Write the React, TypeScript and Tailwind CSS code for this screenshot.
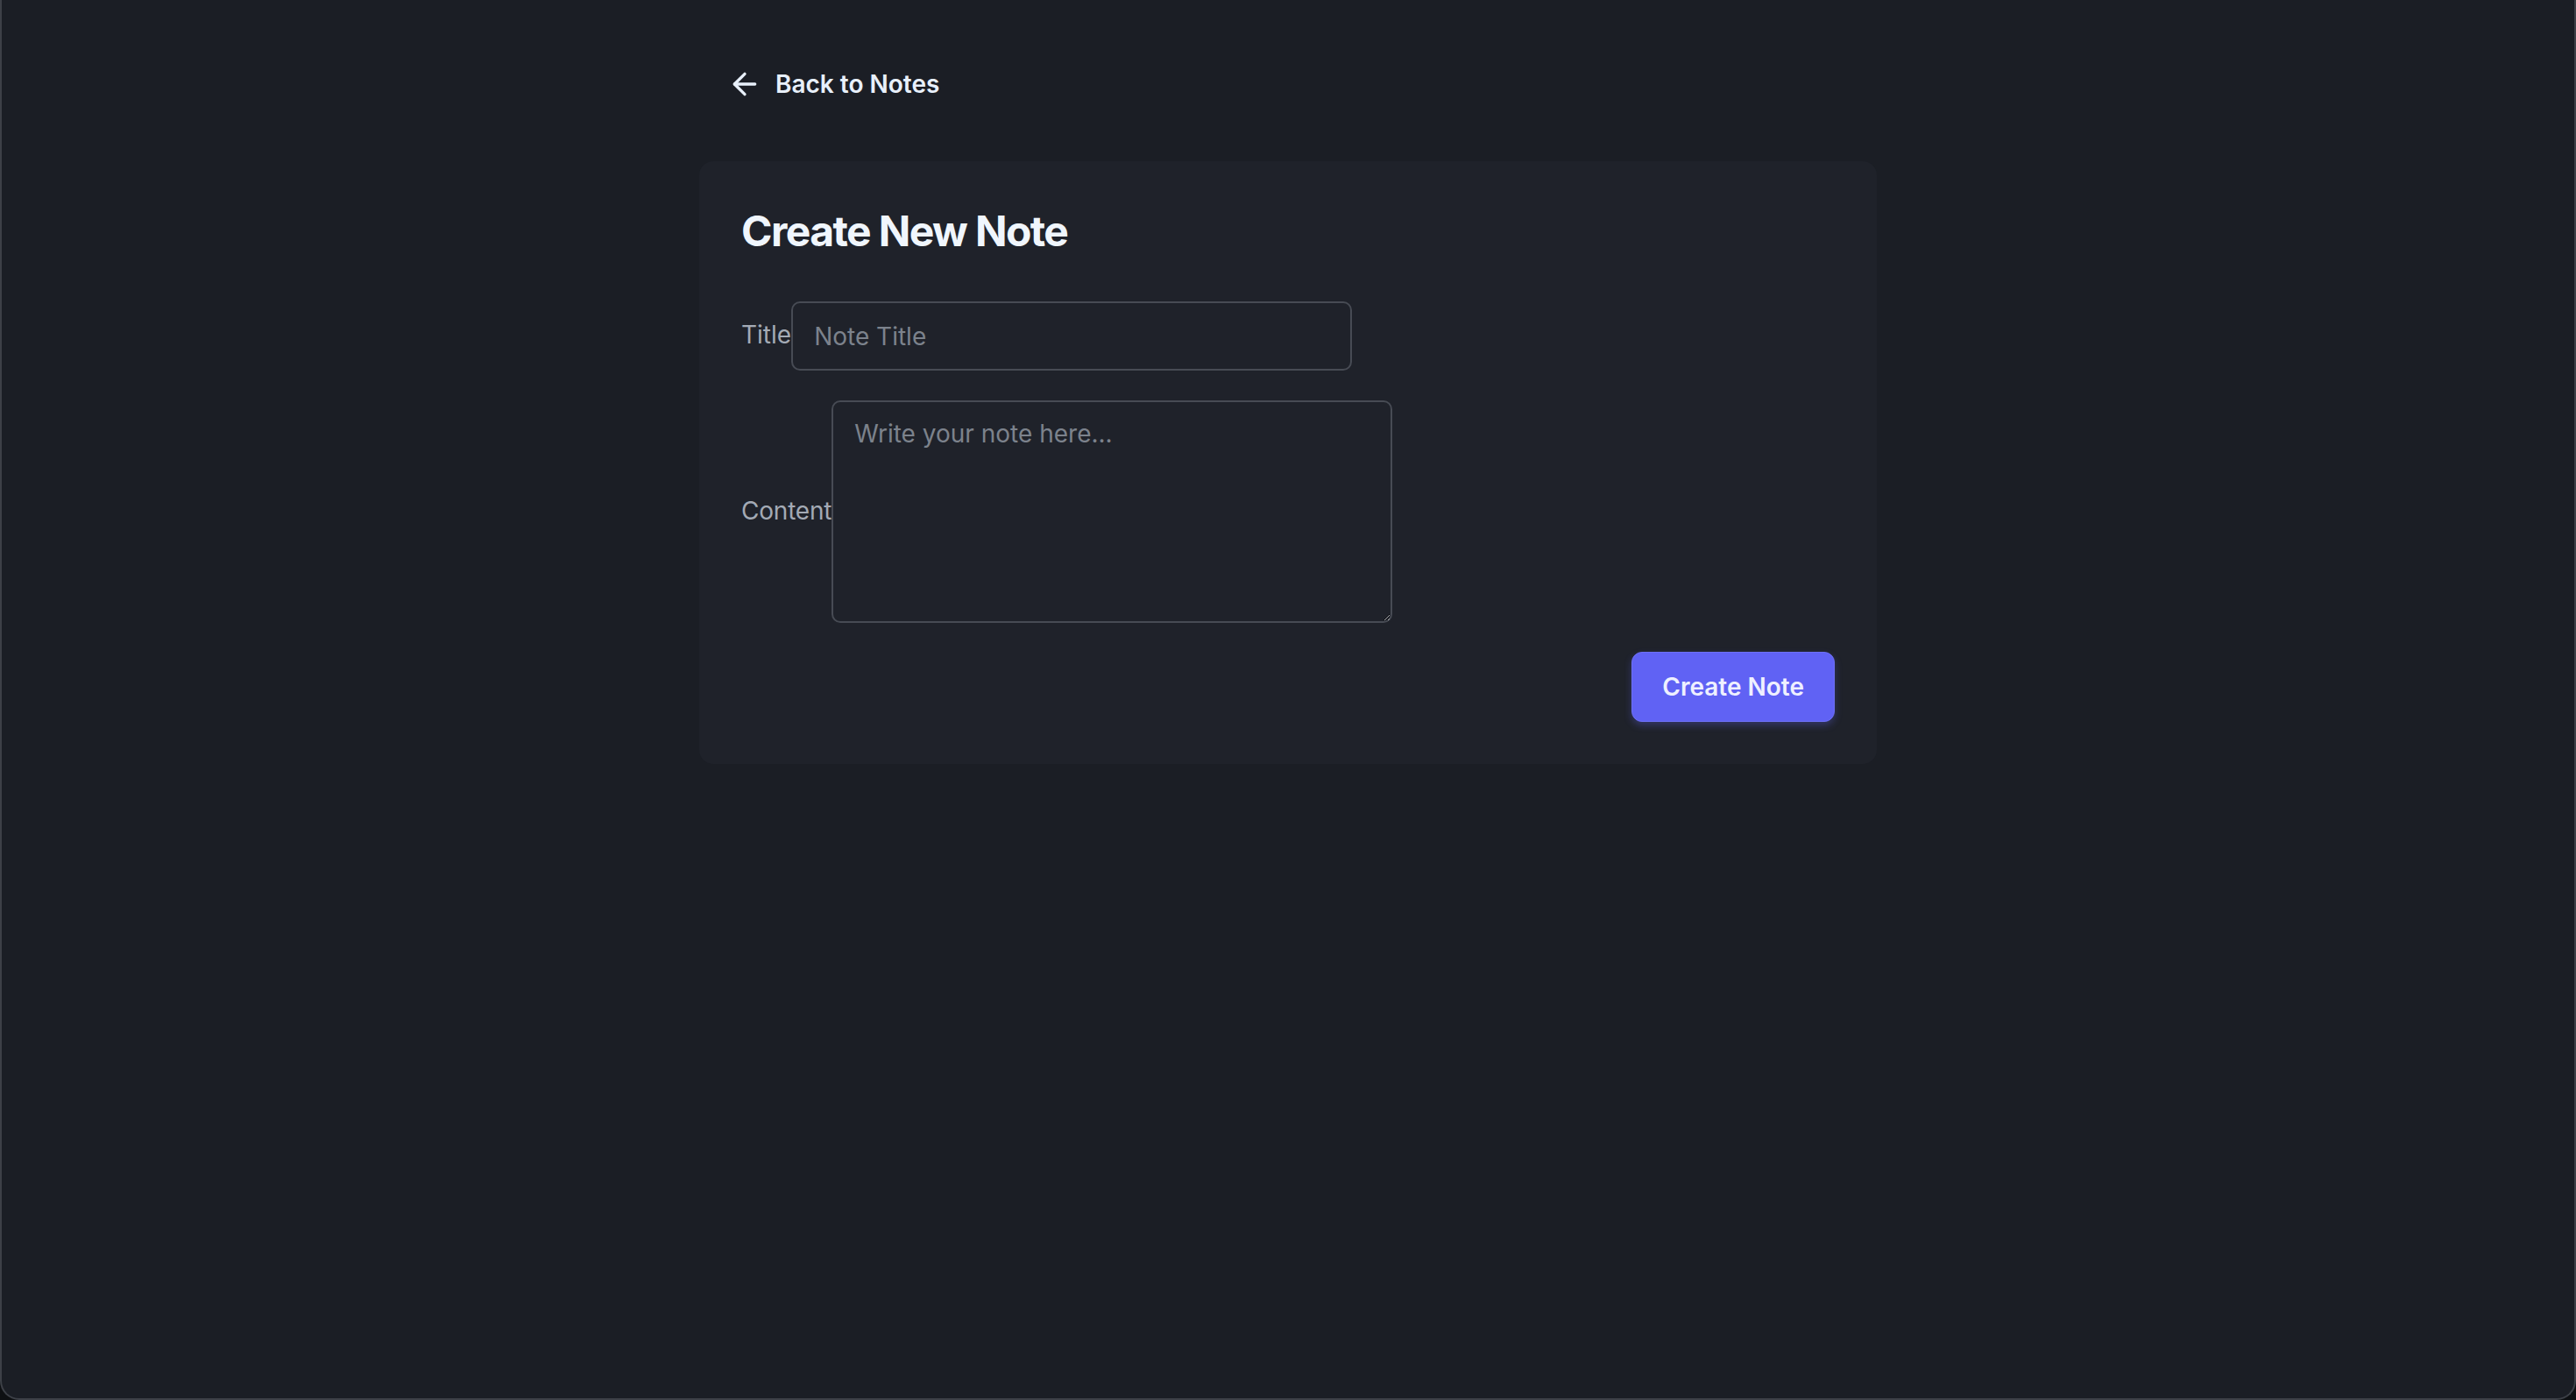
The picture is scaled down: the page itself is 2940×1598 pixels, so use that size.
import React, { useState } from 'react';
import { ArrowLeft } from 'lucide-react';

export default function App() {
  const [title, setTitle] = useState('');
  const [content, setContent] = useState('');

  return (
    <div className="h-screen w-full overflow-hidden bg-[#0e1013]" style={{ fontFamily: 'Inter, "Noto Sans", sans-serif' }}>
      <div className="h-full w-full rounded-b-[22px] border-x-2 border-b-2 border-[#3d4047] bg-[#1b1e25]">
        <div className="mx-auto w-[1344px] pt-[76px]">
          {/* Back link */}
          <a href="#" className="flex h-[40px] items-center gap-[15px] px-[32px] text-[28px] font-semibold leading-[40px] text-[#e8f0fb]">
            <ArrowLeft size={40} strokeWidth={2} />
            <span>Back to Notes</span>
          </a>

          {/* Form card */}
          <div className="mt-[68px] rounded-[16px] bg-[#1f222a] p-[48px]">
            <h1 className="mb-[48px] text-[48px] font-bold leading-[64px] tracking-[-1.6px] text-[#f0f6fd]">Create New Note</h1>

            <div className="flex items-center">
              <label className="-mt-[3px] text-[28px] leading-[40px] text-[#a3aab5]">Title</label>
              <input
                type="text"
                value={title}
                onChange={(e) => setTitle(e.target.value)}
                placeholder="Note Title"
                className="h-[79px] w-[640px] rounded-[10px] border-2 border-[#474b54] bg-[#1f222a] px-[24px] text-[28px] text-white outline-none placeholder:text-[#7c828c]"
              />
            </div>

            <div className="mt-[34px] flex items-center">
              <label className="-mt-[3px] text-[28px] leading-[40px] tracking-[-0.2px] text-[#a3aab5]">Content</label>
              <textarea
                value={content}
                onChange={(e) => setContent(e.target.value)}
                placeholder="Write your note here..."
                className="h-[254px] w-[640px] rounded-[10px] border-2 border-[#474b54] bg-[#1f222a] px-[24px] py-[16px] text-[28px] leading-[40px] text-white outline-none placeholder:text-[#7c828c]"
              />
            </div>

            <div className="mt-[33px] flex justify-end">
              <button className="h-[80px] rounded-[12px] border border-[#6d70f5] bg-[#6062f4] px-[34px] text-[28px] font-semibold text-[#eef0ff] shadow-[0_4px_8px_rgba(99,102,241,0.3)]">
                Create Note
              </button>
            </div>
          </div>
        </div>
      </div>
    </div>
  );
}
